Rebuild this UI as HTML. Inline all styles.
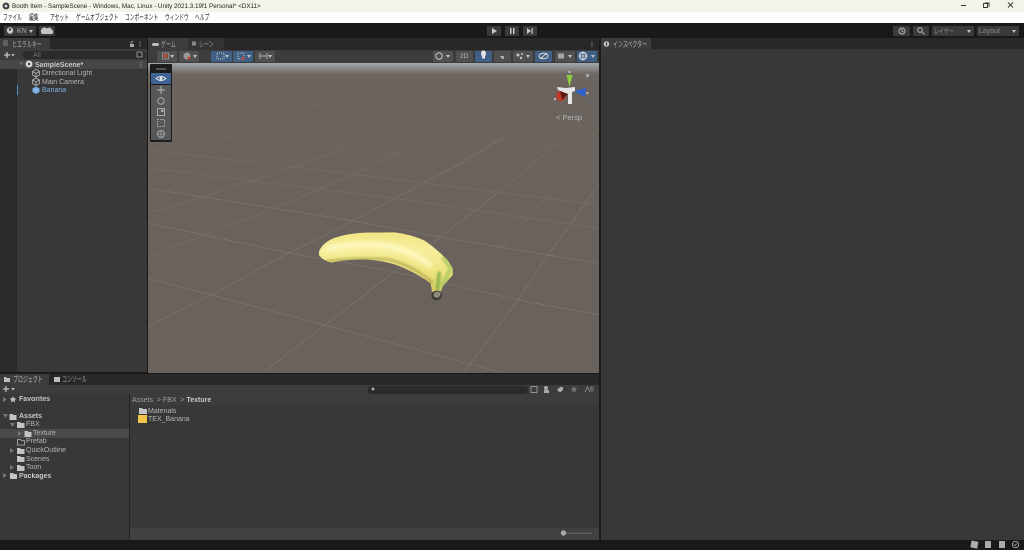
<!DOCTYPE html>
<html><head><meta charset="utf-8"><style>
html,body{margin:0;padding:0;width:1024px;height:550px;overflow:hidden;background:#191919}
body{position:relative;font-family:"Liberation Sans","Noto Sans CJK JP",sans-serif}
div{position:absolute;box-sizing:border-box}
.t{white-space:nowrap;font-size:7px;line-height:9px;color:#b4b4b4;filter:blur(.2px)}
.d{font-size:8px;line-height:11px;color:#1c1c1c;white-space:nowrap;transform:scaleX(.59);transform-origin:0 0;filter:blur(.15px)}
.s{font-size:8px;transform:scaleX(.62);transform-origin:0 0}
.g{background:#505050;border-radius:1px;height:11px;top:50.5px}
.u{background:#3f5f85;border-radius:1px;height:11px;top:50.5px}
.a{width:0;height:0;border-left:2.5px solid transparent;border-right:2.5px solid transparent;border-top:3px solid #c4c4c4}
.tool{left:151px;width:20px;height:10.5px;background:#575757}
.b{font-weight:bold;color:#c8c8c8}
svg{position:absolute;left:0;top:0}
</style></head><body>
<div style="left:0;top:0;width:1024px;height:12px;background:#f3f3e9"></div>
<div style="left:0;top:12px;width:1024px;height:11px;background:#fefefe"></div>
<div class="t" style="left:12px;top:1.5px;color:#222;font-size:6.3px">Booth Item - SampleScene - Windows, Mac, Linux - Unity 2021.3.19f1 Personal* &lt;DX11&gt;</div>
<div class="d" style="left:3px;top:12px">ファイル</div>
<div class="d" style="left:29px;top:12px">編集</div>
<div class="d" style="left:50px;top:12px">アセット</div>
<div class="d" style="left:76px;top:12px">ゲームオブジェクト</div>
<div class="d" style="left:125px;top:12px">コンポーネント</div>
<div class="d" style="left:165px;top:12px">ウィンドウ</div>
<div class="d" style="left:195px;top:12px">ヘルプ</div>

<!-- toolbar -->
<div style="left:4px;top:26px;width:32px;height:10px;background:#3a3a3a;border-radius:1px"></div>
<div class="t" style="left:17px;top:26.5px;color:#a8a8a8">KN</div>
<div class="a" style="left:29px;top:30px"></div>
<div style="left:39px;top:26px;width:16px;height:10px;background:#3a3a3a;border-radius:1px"></div>
<div style="left:487px;top:26px;width:14px;height:10px;background:#3a3a3a"></div>
<div style="left:505px;top:26px;width:14px;height:10px;background:#3a3a3a"></div>
<div style="left:523px;top:26px;width:14px;height:10px;background:#3a3a3a"></div>
<div style="left:893px;top:26px;width:17px;height:10px;background:#3a3a3a;border-radius:1px"></div>
<div style="left:913px;top:26px;width:16px;height:10px;background:#3a3a3a;border-radius:1px"></div>
<div style="left:932px;top:26px;width:42px;height:10px;background:#3a3a3a;border-radius:1px"></div>
<div class="t s" style="left:934px;top:26.5px;color:#8a8a8a">レイヤー</div>
<div class="a" style="left:967px;top:30px"></div>
<div style="left:977px;top:26px;width:42px;height:10px;background:#3a3a3a;border-radius:1px"></div>
<div class="t" style="left:979px;top:26.5px;color:#8a8a8a">Layout</div>
<div class="a" style="left:1012px;top:30px"></div>
<svg width="1024" height="550">
<circle cx="10" cy="30.5" r="3.2" fill="#c8c8c8"/>
<circle cx="10" cy="29.5" r="1.2" fill="#3a3a3a"/>
<path d="M42 34 h10 a2.2 2.2 0 0 0 0-4 a3 3 0 0 0-5-1.5 a2.5 2.5 0 0 0-5 5.5z" fill="#c4c4c4"/>
<path d="M492 28v6l5-3z" fill="#c8c8c8"/>
<path d="M510 28h1.5v6H510zM513 28h1.5v6H513z" fill="#c8c8c8"/>
<path d="M527 28v6l4-3zM531.5 28h1.2v6h-1.2z" fill="#c8c8c8"/>
<g fill="none" stroke="#b8b8b8" stroke-width="1"><circle cx="902" cy="31" r="3"/><path d="M902 29v2l1.5 1"/><circle cx="920" cy="30" r="2.3"/><path d="M922 32l2.5 2.5"/></g>
<path d="M961 5.500h5" stroke="#333" stroke-width="1"/>
<path d="M983.500 3.500h4v4h-4z M985 3h4v4" fill="none" stroke="#333" stroke-width=".9"/>
<path d="M1008 2.500l5 5M1013 2.500l-5 5" stroke="#333" stroke-width=".9"/>
</svg>

<!-- hierarchy -->
<div style="left:0;top:38px;width:147px;height:11px;background:#282828"></div>
<div style="left:0;top:38px;width:50px;height:12px;background:#3c3c3c"></div>
<div class="t s" style="left:12px;top:39.500px;color:#a8a8a8">ヒエラルキー</div>
<div style="left:0;top:49px;width:147px;height:11px;background:#3c3c3c"></div>
<div style="left:23px;top:50.500px;width:123px;height:8.500px;background:#2b2b2b;border-radius:4px"></div>
<div class="t" style="left:33px;top:50.500px;color:#727272">All</div>
<div style="left:0;top:60px;width:17px;height:312px;background:#2a2a2a"></div>
<div style="left:17px;top:60px;width:130px;height:312px;background:#383838"></div>
<div style="left:0;top:60px;width:147px;height:9px;background:#474747"></div>
<div style="left:17px;top:85px;width:1px;height:10px;background:#4b8fd0"></div>
<div class="t b" style="left:35px;top:60.500px">SampleScene*</div>
<div class="t" style="left:42px;top:69px">Directional Light</div>
<div class="t" style="left:42px;top:77.500px">Main Camera</div>
<div class="t" style="left:42px;top:85.500px;color:#7bade0">Banana</div>

<!-- scene -->
<div style="left:148px;top:38px;width:451px;height:12px;background:#282828"></div>
<div style="left:148px;top:38px;width:40px;height:12px;background:#3c3c3c"></div>
<div class="t s" style="left:161px;top:39.500px;color:#b0b0b0">ゲーム</div>
<div style="left:188px;top:38px;width:36px;height:12px;background:#333"></div>
<div class="t s" style="left:199px;top:39.500px;color:#a0a0a0">シーン</div>
<div style="left:148px;top:50px;width:451px;height:13px;background:#3c3c3c"></div>
<div class="g" style="left:157px;width:20px"></div><div class="g" style="left:179px;width:20px"></div>
<div class="u" style="left:211px;width:21px"></div><div class="u" style="left:233px;width:20px"></div>
<div class="g" style="left:255px;width:20px"></div>
<div class="g" style="left:433px;width:20px"></div>
<div class="g" style="left:456px;width:17px"></div>
<div class="t" style="left:460px;top:52px;font-size:6.500px;color:#bbb">2D</div>
<div class="u" style="left:475px;width:17px"></div>
<div class="g" style="left:494px;width:17px"></div>
<div class="g" style="left:513px;width:20px"></div>
<div class="u" style="left:535px;width:17px"></div>
<div class="g" style="left:555px;width:20px"></div>
<div class="u" style="left:577px;width:20px"></div>
<div class="a" style="left:170px;top:55px"></div><div class="a" style="left:193px;top:55px"></div>
<div class="a" style="left:225px;top:55px"></div><div class="a" style="left:247px;top:55px"></div>
<div class="a" style="left:268px;top:55px"></div><div class="a" style="left:446px;top:55px"></div>
<div class="a" style="left:526px;top:55px"></div><div class="a" style="left:568px;top:55px"></div>
<div class="a" style="left:591px;top:55px"></div>
<div style="left:148px;top:63px;width:451px;height:310px;background:linear-gradient(#a3a9ac 0,#8f9090 4px,#6f6863 11px,#6b635d 24px,#6a625c 100%)"></div>
<svg width="1024" height="550">
<g transform="translate(148,140) scale(.33333)">
<g stroke="#7e7771" stroke-width="2" fill="none">
<path d="M0 415L530 555 1050 695M0 250L430 340 740 395 1110 480 1355 525M0 145L380 205 600 240 900 295 1200 345 1355 370M350 695L530 555 740 395 880 290 1060 150 1240 0M950 695L1110 480 1200 345 1270 250 1355 130M0 560L190 465 430 335 620 240 740 175 920 80 1070-10"/>
</g>
<g stroke="#78716b" stroke-width="1.800" fill="none">
<path d="M0 85L740 175 1355 265M0 30L600 100 1355 195M0 350L170 285 380 205 600 110 840 0M0 220L165 170 340 115 600 20M1355-40L1300 30 1180 190 1060 320"/>
</g>
<g stroke="#726b65" stroke-width="1.500" fill="none">
<path d="M0-30L800 45 1355 100M0-85L800-20 1355 30M0-140L800-85 1355-40M0 130L300 40 600-60M0 60L250-10 520-110M840 0L1120-140M1060 150L1240 0 1355-100"/>
</g>
<defs>
<linearGradient id="bn" x1="0" y1="0" x2="0" y2="1"><stop offset="0" stop-color="#f1e684"/><stop offset=".3" stop-color="#f6ee9c"/><stop offset=".7" stop-color="#eee27e"/><stop offset="1" stop-color="#d4c965"/></linearGradient>
<filter id="bl" filterUnits="userSpaceOnUse" x="400" y="200" width="620" height="340"><feGaussianBlur stdDeviation="6"/></filter>
<filter id="bs" filterUnits="userSpaceOnUse" x="400" y="200" width="620" height="340"><feGaussianBlur stdDeviation="4"/></filter>
<clipPath id="bc"><path d="M513 335Q520 312 555 295 600 280 650 278L740 277Q790 283 830 302 870 330 900 362L914 385V405L885 438 878 455H852L848 430Q815 405 770 385 720 362 650 358 590 358 550 368 525 362 513 345Z"/></clipPath>
</defs>
<path d="M513 335Q520 312 555 295 600 280 650 278L740 277Q790 283 830 302 870 330 900 362L914 385V405L885 438 878 455H852L848 430Q815 405 770 385 720 362 650 358 590 358 550 368 525 362 513 345Z" fill="url(#bn)"/>
<g clip-path="url(#bc)">
<path d="M535 328Q620 305 720 318 790 330 850 378" stroke="#fffbc8" stroke-width="15" fill="none" filter="url(#bl)"/>
<path d="M530 365Q630 352 720 358 800 378 855 430" stroke="#b9af52" stroke-width="8" fill="none" filter="url(#bs)"/>
<path d="M885 350L908 385 882 440" stroke="#b0cc66" stroke-width="12" fill="none" filter="url(#bs)"/>
<path d="M874 395L868 450" stroke="#7aae45" stroke-width="9" fill="none" filter="url(#bs)"/>
</g>
<ellipse cx="866" cy="466" rx="16" ry="14" transform="rotate(-20 866 466)" fill="#3a3832"/>
<ellipse cx="867" cy="464" rx="11" ry="9" transform="rotate(-20 867 464)" fill="#8f8b80"/>
</g>

<!-- gizmo -->
<path d="M566.500 75L572.500 75 569.500 87z" fill="#8fce3e"/>
<circle cx="561" cy="96" r="5" fill="#c23a28"/>
<path d="M560 91L568 94 562 100z" fill="#5a1a12"/>
<path d="M574 91L586 88 585 97z" fill="#2f62d0"/>
<path d="M557 87L566 88 575 87 575 91 572 92 572 104 568 104 568 94 558 90z" fill="#e6e6e6"/>
<rect x="586" y="74" width="3" height="3" fill="#aaa"/>
<rect x="568.500" y="71" width="2" height="2" fill="#bbb"/><rect x="586.500" y="92" width="2" height="2" fill="#bbb"/><rect x="554" y="98" width="2" height="2" fill="#bbb"/>
</svg>
<div class="t" style="left:556px;top:113px;color:#b8b8b8;font-size:7.500px">&lt; Persp</div>

<!-- tool overlay -->
<div style="left:150px;top:64px;width:22px;height:77.500px;background:#1c1c1c;border-radius:1px"></div>
<div style="left:156px;top:67.500px;width:10px;height:2px;background:#555"></div>
<div class="tool" style="top:73px;background:#3f6494"></div>
<div class="tool" style="top:85px"></div><div class="tool" style="top:96px"></div>
<div class="tool" style="top:107px"></div><div class="tool" style="top:118px"></div><div class="tool" style="top:129px"></div>
<svg width="1024" height="550">
<path d="M156 78.500q5-4 10 0q-5 4-10 0z" fill="none" stroke="#e8e8e8"/><circle cx="161" cy="78.500" r="1.500" fill="#e8e8e8"/>
<path d="M161 86v8M157 90h8" stroke="#a8a8a8" stroke-width="1.200"/>
<circle cx="161" cy="101" r="3.200" fill="none" stroke="#a8a8a8"/>
<rect x="157.500" y="108.500" width="7" height="7" fill="none" stroke="#a8a8a8"/><rect x="161" y="109.500" width="2.500" height="2.500" fill="#a8a8a8"/>
<rect x="157.500" y="119.500" width="7" height="7" fill="none" stroke="#a8a8a8" stroke-dasharray="1.500 1"/>
<circle cx="161" cy="134" r="3.500" fill="none" stroke="#a8a8a8"/><path d="M157 134h8M161 130v8" stroke="#a8a8a8" stroke-width=".7"/>
<g fill="#c6c6c6">
<rect x="162.500" y="53" width="6" height="6" fill="#5f4f4a" stroke="#aaa" stroke-width=".7"/><circle cx="165.500" cy="56" r="1.800" fill="#c24a2e"/>
<circle cx="187" cy="56" r="3.500" fill="#9a9a9a"/><circle cx="189" cy="58" r="1.500" fill="#c24a2e"/>
<rect x="217" y="53" width="7" height="6" fill="none" stroke="#c8c8c8" stroke-dasharray="1 1"/>
<rect x="238" y="53" width="6" height="6" fill="none" stroke="#c8c8c8" stroke-dasharray="1 1"/><circle cx="243" cy="58.500" r="1.500" fill="#c24a2e"/>
<path d="M260 53v6M267 53v6M260 56h7" stroke="#9c9c9c" stroke-width="1.200"/>
<circle cx="439" cy="56" r="3.200" fill="none" stroke="#c8c8c8"/>
<path d="M481 53a2.500 2.500 0 0 1 5 0q0 2-1 3.500v2h-3v-2q-1-1.500-1-3.500z" fill="#e4e4e4"/>
<path d="M500 53v3h4v3h-2l-2-3z" fill="#aaa"/>
<circle cx="518" cy="55" r="1.500"/><circle cx="521" cy="58" r="1.200"/><circle cx="522" cy="54" r="1"/>
<ellipse cx="543.500" cy="56" rx="4.500" ry="2.800" fill="none" stroke="#d8d8d8"/><path d="M540 59l7-6" stroke="#d8d8d8"/>
<rect x="558" y="53.500" width="6" height="5" fill="#a8a8a8"/>
<circle cx="583" cy="56" r="3.500" fill="none" stroke="#e0e0e0" stroke-width="1.200"/><path d="M583 51.500v9M578.500 56h9" stroke="#e0e0e0" stroke-width=".7"/>
</g>
<g fill="#bbb"><rect x="152" y="43" width="7" height="3" rx="1.500"/><rect x="192" y="41.500" width="4" height="4" fill="#888"/></g>
<!-- menu dots / locks -->
<g fill="#a8a8a8">
<rect x="139.500" y="41.500" width="1" height="1"/><rect x="139.500" y="43.500" width="1" height="1"/><rect x="139.500" y="45.500" width="1" height="1"/>
<rect x="591.500" y="42" width="1" height="1"/><rect x="591.500" y="44" width="1" height="1"/><rect x="591.500" y="46" width="1" height="1"/>
<rect x="591.500" y="377" width="1" height="1"/><rect x="591.500" y="379" width="1" height="1"/><rect x="591.500" y="381" width="1" height="1"/>
<rect x="1016" y="42" width="1" height="1"/><rect x="1016" y="44" width="1" height="1"/><rect x="1016" y="46" width="1" height="1"/>
<rect x="140.500" y="62" width="1" height="1"/><rect x="140.500" y="64" width="1" height="1"/><rect x="140.500" y="66" width="1" height="1"/>
<rect x="130" y="44" width="4" height="3"/><rect x="582" y="379" width="4" height="3"/><rect x="1005" y="44" width="4" height="3"/>
</g>
<g fill="none" stroke="#a8a8a8" stroke-width=".8"><path d="M131 44v-1.500a1 1 0 0 1 2 0M583 379v-1.500a1 1 0 0 1 2 0M1006 44v-1.500a1 1 0 0 1 2 0"/></g>
<!-- hierarchy icons -->
<path d="M4 55h6M7 52v6" stroke="#c6c6c6" stroke-width="1.300"/>
<path d="M11 54h4l-2 2.500z" fill="#b4b4b4"/>
<rect x="137" y="52" width="5" height="5" fill="none" stroke="#aaa" stroke-width=".8"/>
<path d="M19 62h5l-2.500 4z" fill="#666"/>
<circle cx="29" cy="64" r="3.500" fill="#d6d6d6"/><circle cx="29" cy="64" r="1.200" fill="#444"/>
<g fill="none" stroke="#b8b8b8" stroke-width=".8">
<path d="M36 69.500l3.500 2v3.500l-3.500 2-3.500-2v-3.500zM32.500 71.500l3.500 2 3.500-2M36 73.500v3.500"/>
<path d="M36 78l3.500 2v3.500l-3.500 2-3.500-2v-3.500zM32.500 80l3.500 2 3.500-2M36 82v3.500"/>
</g>
<path d="M36 86.500l3.500 2v3.500l-3.500 2-3.500-2v-3.500z" fill="#7fb2e5"/>
<path d="M3 41h5M3 43h5M3 45h5" stroke="#999" stroke-width=".8"/>
</svg>

<!-- inspector -->
<div style="left:601px;top:38px;width:423px;height:11px;background:#282828"></div>
<div style="left:601px;top:38px;width:50px;height:12px;background:#3c3c3c"></div>
<div class="t s" style="left:613px;top:39.500px;color:#b0b0b0">インスペクター</div>
<div style="left:601px;top:49px;width:423px;height:491px;background:#383838"></div>

<!-- project -->
<div style="left:0;top:374px;width:599px;height:11px;background:#282828"></div>
<div style="left:0;top:374px;width:49px;height:11px;background:#3c3c3c"></div>
<div class="t s" style="left:13px;top:375px;color:#b8b8b8">プロジェクト</div>
<div class="t s" style="left:62px;top:375px;color:#a0a0a0">コンソール</div>
<div style="left:0;top:385px;width:599px;height:9px;background:#3c3c3c"></div>
<div style="left:368px;top:385.500px;width:160px;height:8px;background:#2a2a2a;border-radius:3px"></div>
<div style="left:0;top:394px;width:129px;height:146px;background:#383838"></div>
<div style="left:129px;top:394px;width:1px;height:146px;background:#232323"></div>
<div style="left:130px;top:394px;width:469px;height:12px;background:#3c3c3c"></div>
<div style="left:130px;top:406px;width:469px;height:122px;background:#383838"></div>
<div style="left:130px;top:528px;width:469px;height:12px;background:#414141"></div>
<div style="left:0;top:429px;width:129px;height:8.500px;background:#4a4a4a"></div>
<div style="left:599px;top:38px;width:2px;height:502px;background:#1b1b1b"></div>
<div class="t b" style="left:19px;top:395px">Favorites</div>
<div class="t b" style="left:19px;top:411.500px">Assets</div>
<div class="t" style="left:26px;top:420px">FBX</div>
<div class="t" style="left:33px;top:429px">Texture</div>
<div class="t" style="left:26px;top:437px">Prefab</div>
<div class="t" style="left:26px;top:446px">QuickOutline</div>
<div class="t" style="left:26px;top:454.500px">Scenes</div>
<div class="t" style="left:26px;top:463px">Toon</div>
<div class="t b" style="left:19px;top:471.500px">Packages</div>
<div class="t" style="left:132px;top:395.500px;color:#a0a0a0">Assets &nbsp;&gt; FBX &nbsp;&gt; <span class="b" style="color:#c8c8c8">Texture</span></div>
<div class="t" style="left:148px;top:406.500px">Materials</div>
<div class="t" style="left:148px;top:415px">TEX_Banana</div>
<div style="left:138px;top:415px;width:9px;height:8px;background:#f2c648"></div>
<svg width="1024" height="550">
<g fill="#c4c4c4">
<path d="M139 408h3l1 1h4v5h-8z"/>
<path d="M9.500 414h3l1 1h3v5h-7z"/>
<path d="M17 422h3l1 1h3.500v5H17z"/>
<path d="M24.500 431h3l1 1h3v5h-7z"/>
<path d="M17 448h3l1 1h3.500v5H17z"/><path d="M17 456h3l1 1h3.500v5H17z"/><path d="M17 465h3l1 1h3.500v5H17z"/>
<path d="M10 473h3l1 1h3v5h-7z"/>
<path d="M13 396l1 2.300 2.400.2-1.800 1.500.6 2.400-2.200-1.300-2.200 1.300.6-2.400-1.800-1.500 2.400-.2z"/>
</g>
<path d="M17.500 439.500h3l1 1h3v4.500h-7z" fill="none" stroke="#b8b8b8" stroke-width=".8"/>
<g fill="#777">
<path d="M3 397l4 2.500-4 2.500z"/><path d="M3 414h5l-2.500 4z"/><path d="M10 423h5l-2.500 4z"/>
<path d="M18 431l4 2.500-4 2.500z"/><path d="M10 448l4 2.500-4 2.500z"/><path d="M10 465l4 2.500-4 2.500z"/><path d="M3 473l4 2.500-4 2.500z"/>
</g>
<path d="M3 389h6M6 386v6" stroke="#c6c6c6" stroke-width="1.200"/><path d="M11 388h4l-2 2.500z" fill="#b4b4b4"/>
<path d="M4 377h2l1 1h3v4H4zM54 377h6v5h-6z" fill="#bdbdbd"/>
<g fill="#aaa"><circle cx="373" cy="389" r="1.500"/><rect x="531" y="386.500" width="6" height="6" fill="none" stroke="#aaa" stroke-width=".8"/>
<circle cx="546" cy="388" r="2"/><rect x="544" y="390" width="5" height="3"/>
<path d="M557 390l3-3h3v3l-3 2.500z"/><path d="M574 386l1 2.300 2.400.2-1.800 1.500.6 2.400-2.200-1.300-2.200 1.300.6-2.400-1.800-1.500 2.400-.2z" fill="#777"/></g>
<text x="590" y="391.500" font-family="Liberation Sans" font-size="7" fill="#9a9a9a">6</text>
<path d="M585 392l2.500-5 2.500 5" stroke="#999" fill="none" stroke-width=".8"/>
<rect x="565" y="532.500" width="27" height="1.500" fill="#5c5c5c"/><circle cx="563.500" cy="533" r="2.700" fill="#a8a8a8"/>
<g fill="#aaa">
<rect x="971" y="541" width="7" height="7" transform="rotate(10 974 544)"/>
<rect x="985" y="541" width="6" height="7"/>
<rect x="999" y="541" width="6" height="7"/>
</g>
<circle cx="1015.500" cy="544.500" r="3.200" fill="none" stroke="#aaa" stroke-width=".9"/><path d="M1014 544.500l1 1 2-2" stroke="#aaa" fill="none" stroke-width=".8"/>
<circle cx="606.500" cy="44" r="2.800" fill="#bdbdbd"/><rect x="606" y="42.500" width="1" height="3" fill="#333"/>
<circle cx="6" cy="6" r="3.500" fill="#444"/><circle cx="6" cy="6" r="1.300" fill="#eee"/>
</svg>
</body></html>
